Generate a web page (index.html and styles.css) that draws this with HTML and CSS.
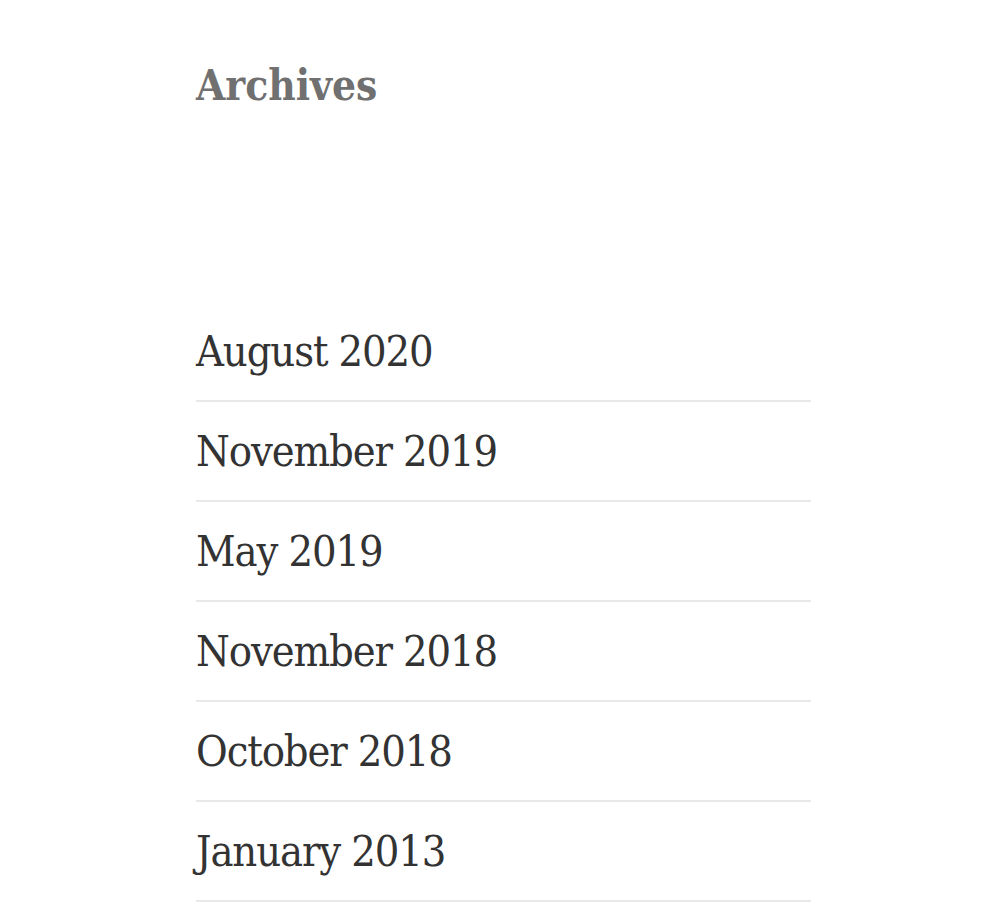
FILE: index.html
```html
<!DOCTYPE html>
<html>
<head>
<meta charset="utf-8">
<link rel="stylesheet" href="styles.css">
</head>
<body>
<aside class="widget">
  <h2 class="widget-title">Archives</h2>
  <ul class="archive-list">
    <li><a href="#">August 2020</a></li>
    <li><a href="#">November 2019</a></li>
    <li><a href="#">May 2019</a></li>
    <li><a href="#">November 2018</a></li>
    <li><a href="#">October 2018</a></li>
    <li><a href="#">January 2013</a></li>
  </ul>
</aside>
</body>
</html>
```
FILE: styles.css
```css
html, body {
  margin: 0;
  padding: 0;
  background: #fff;
}
.widget {
  margin-left: 196px;
  width: 615px;
  font-family: "DejaVu Serif Condensed", "DejaVu Serif", serif;
}
.widget-title {
  margin: 0;
  padding-top: 61px;
  font-size: 42px;
  line-height: 50px;
  font-weight: bold;
  color: #707070;
}
.archive-list {
  list-style: none;
  margin: 191px 0 0;
  padding: 0;
}
.archive-list li {
  box-sizing: border-box;
  height: 100px;
  padding-top: 21px;
  border-bottom: 2px solid #e8e8e8;
  font-size: 43px;
  line-height: 56px;
  letter-spacing: -1.1px;
}
.archive-list a {
  color: #333;
  text-decoration: none;
}
```
